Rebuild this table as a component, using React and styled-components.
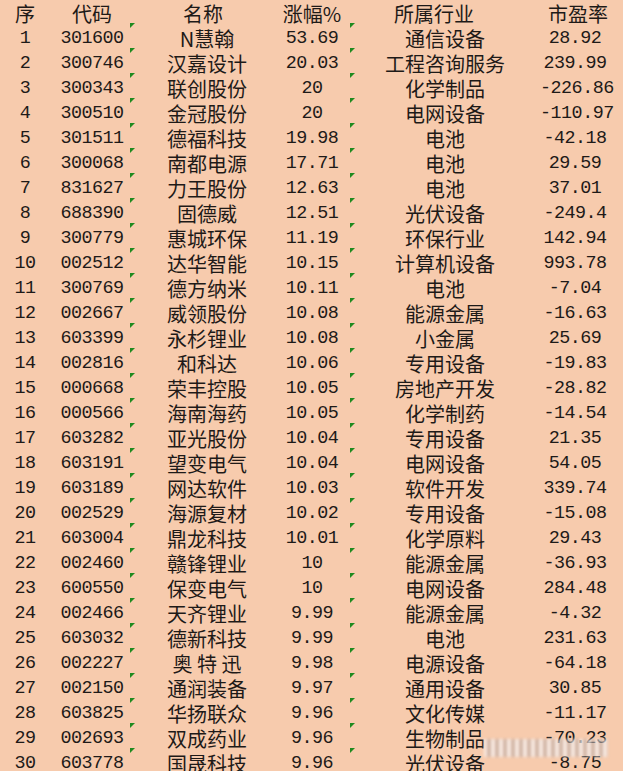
import React from "react";
import styled, { createGlobalStyle } from "styled-components";

const Global = createGlobalStyle`
  html, body { margin: 0; padding: 0; background: #f7cbad; }
  body { overflow: hidden; }
`;

const rows = [
  ["1", "301600", "N慧翰", "53.69", "通信设备", "28.92"],
  ["2", "300746", "汉嘉设计", "20.03", "工程咨询服务", "239.99"],
  ["3", "300343", "联创股份", "20", "化学制品", "-226.86"],
  ["4", "300510", "金冠股份", "20", "电网设备", "-110.97"],
  ["5", "301511", "德福科技", "19.98", "电池", "-42.18"],
  ["6", "300068", "南都电源", "17.71", "电池", "29.59"],
  ["7", "831627", "力王股份", "12.63", "电池", "37.01"],
  ["8", "688390", "固德威", "12.51", "光伏设备", "-249.4"],
  ["9", "300779", "惠城环保", "11.19", "环保行业", "142.94"],
  ["10", "002512", "达华智能", "10.15", "计算机设备", "993.78"],
  ["11", "300769", "德方纳米", "10.11", "电池", "-7.04"],
  ["12", "002667", "威领股份", "10.08", "能源金属", "-16.63"],
  ["13", "603399", "永杉锂业", "10.08", "小金属", "25.69"],
  ["14", "002816", "和科达", "10.06", "专用设备", "-19.83"],
  ["15", "000668", "荣丰控股", "10.05", "房地产开发", "-28.82"],
  ["16", "000566", "海南海药", "10.05", "化学制药", "-14.54"],
  ["17", "603282", "亚光股份", "10.04", "专用设备", "21.35"],
  ["18", "603191", "望变电气", "10.04", "电网设备", "54.05"],
  ["19", "603189", "网达软件", "10.03", "软件开发", "339.74"],
  ["20", "002529", "海源复材", "10.02", "专用设备", "-15.08"],
  ["21", "603004", "鼎龙科技", "10.01", "化学原料", "29.43"],
  ["22", "002460", "赣锋锂业", "10", "能源金属", "-36.93"],
  ["23", "600550", "保变电气", "10", "电网设备", "284.48"],
  ["24", "002466", "天齐锂业", "9.99", "能源金属", "-4.32"],
  ["25", "603032", "德新科技", "9.99", "电池", "231.63"],
  ["26", "002227", "奥 特 迅", "9.98", "电源设备", "-64.18"],
  ["27", "002150", "通润装备", "9.97", "通用设备", "30.85"],
  ["28", "603825", "华扬联众", "9.96", "文化传媒", "-11.17"],
  ["29", "002693", "双成药业", "9.96", "生物制品", "-70.23"],
  ["30", "603778", "国晟科技", "9.96", "光伏设备", "-8.75"],
];

const Sheet = styled.div`
  position: relative;
  width: 623px;
  height: 771px;
  overflow: hidden;
  background: #f7cbad;
  color: #1e1a18;
`;

const Grid = styled.div`
  display: grid;
  grid-template-columns: 50px 80px 144px 76px 190px 70px 13px;
`;

const Cell = styled.div`
  position: relative;
  box-sizing: border-box;
  height: ${(p) => (p.$head ? 23 : 25)}px;
  padding-top: ${(p) => (p.$head ? 4 : 6)}px;
  padding-left: ${(p) => p.$pl || 0}px;
  padding-right: ${(p) => p.$pr || 0}px;
  line-height: 19px;
  text-align: center;
  white-space: nowrap;
  font-family: ${(p) =>
    p.$num
      ? `"Liberation Mono", "Noto Sans CJK SC", monospace`
      : `"Noto Sans CJK SC", sans-serif`};
  font-size: ${(p) => (p.$num ? "18.4px" : "20px")};
  letter-spacing: ${(p) => (p.$num ? "-0.5px" : "0")};
  font-weight: 400;

  ${(p) =>
    p.$flag &&
    `
    &::before {
      content: "";
      position: absolute;
      left: 0;
      top: 0;
      width: 0;
      height: 0;
      border-top: 5px solid #1f8a1f;
      border-right: 5px solid transparent;
    }
  `}
`;

const Watermark = styled.div`
  position: absolute;
  left: 484px;
  top: 739px;
  width: 124px;
  height: 18px;
  background: repeating-linear-gradient(
    90deg,
    rgba(255, 255, 255, 0.75) 0px,
    rgba(235, 225, 222, 0.7) 3px,
    rgba(120, 100, 95, 0.45) 5px,
    rgba(255, 255, 255, 0.7) 8px
  );
  filter: blur(1.5px);
`;

const headers = ["序", "代码", "名称", "涨幅%", "所属行业", "市盈率"];
const headPad = [
  {},
  { $pl: 4 },
  { $pl: 2 },
  {},
  { $pr: 22 },
  { $pl: 6 },
];
const bodyPad = [{}, { $pl: 4 }, { $pl: 10 }, {}, {}, {}];

export default function App() {
  return (
    <Sheet>
      <Global />
      <Grid>
        {headers.map((h, i) => (
          <Cell key={"h" + i} $head {...headPad[i]}>
            {h}
          </Cell>
        ))}
        <Cell $head />
        {rows.map((r, ri) => (
          <React.Fragment key={ri}>
            {r.map((v, ci) => (
              <Cell
                key={ci}
                {...bodyPad[ci]}
                $num={ci === 0 || ci === 1 || ci === 3 || ci === 5}
                $flag={ci === 2 || ci === 4}
              >
                {v}
              </Cell>
            ))}
            <Cell />
          </React.Fragment>
        ))}
      </Grid>
      <Watermark />
    </Sheet>
  );
}
